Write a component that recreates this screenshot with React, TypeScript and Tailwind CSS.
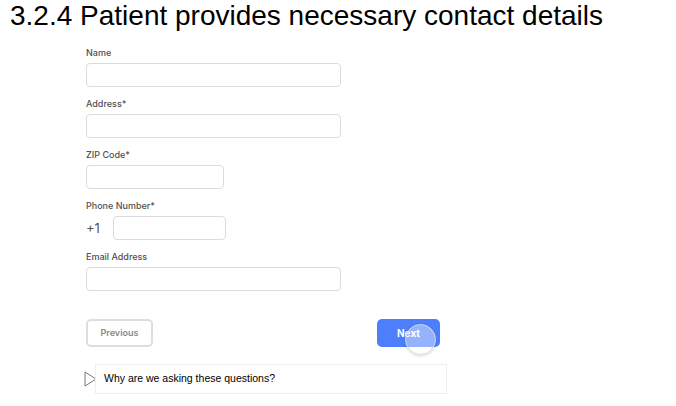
import React from "react";

const Field: React.FC<{ label: string; width?: string; prefix?: string }> = ({
  label,
  width = "w-[255px]",
  prefix,
}) => (
  <div className="flex flex-col">
    <label className="h-[12px] text-[9px] font-medium leading-[12px] text-[#505050]">{label}</label>
    <div className="mt-[4px] flex items-center">
      {prefix && (
        <span className="w-[27px] text-[13px] leading-none text-[#555]">{prefix}</span>
      )}
      <div className={`${width} h-[24px] rounded-[4px] border border-[#dcdcdc] bg-white`} />
    </div>
  </div>
);

export default function App() {
  return (
    <div
      className="h-[406px] w-[676px] overflow-hidden bg-white"
      style={{ fontFamily: "Inter, 'Noto Sans', sans-serif" }}
    >
      <h1 className="pl-[10px] pt-[1px] font-['Liberation_Sans',Arial,sans-serif] text-[28px] leading-[30px] text-black">
        3.2.4 Patient provides necessary contact details
      </h1>

      <div className="ml-[86px] mt-[16px] flex flex-col gap-[11px]">
        <Field label="Name" />
        <Field label="Address*" />
        <Field label="ZIP Code*" width="w-[138px]" />
        <Field label="Phone Number*" width="w-[113px]" prefix="+1" />
        <Field label="Email Address" />
      </div>

      <div className="ml-[86px] mt-[28px] flex w-[354px] items-center justify-between">
        <button className="h-[28px] w-[67px] rounded-[5px] border-2 border-[#dedede] bg-white text-[9px] font-semibold text-[#888]">
          Previous
        </button>
        <button className="relative h-[28px] w-[63px] rounded-[5px] bg-[#4d7ffd] text-[10px] font-bold text-white">
          Next
          <span className="absolute left-[28px] top-[5px] h-[31px] w-[31px] rounded-full border border-[#d8d8d8] bg-white/40 shadow-[0_1px_3px_rgba(0,0,0,0.15)]" />
        </button>
      </div>

      <div className="ml-[84px] mt-[17px] flex items-center">
        <svg width="13" height="16" viewBox="0 0 13 16" className="-mr-[2px] shrink-0">
          <path d="M1 1 L12 8 L1 15 Z" fill="white" stroke="#777" strokeWidth="1" />
        </svg>
        <div className="flex h-[30px] w-[352px] items-center border border-[#eeeeee] pl-[8px] font-['Liberation_Sans',Arial,sans-serif] text-[10.5px] text-black">
          Why are we asking these questions?
        </div>
      </div>
    </div>
  );
}
